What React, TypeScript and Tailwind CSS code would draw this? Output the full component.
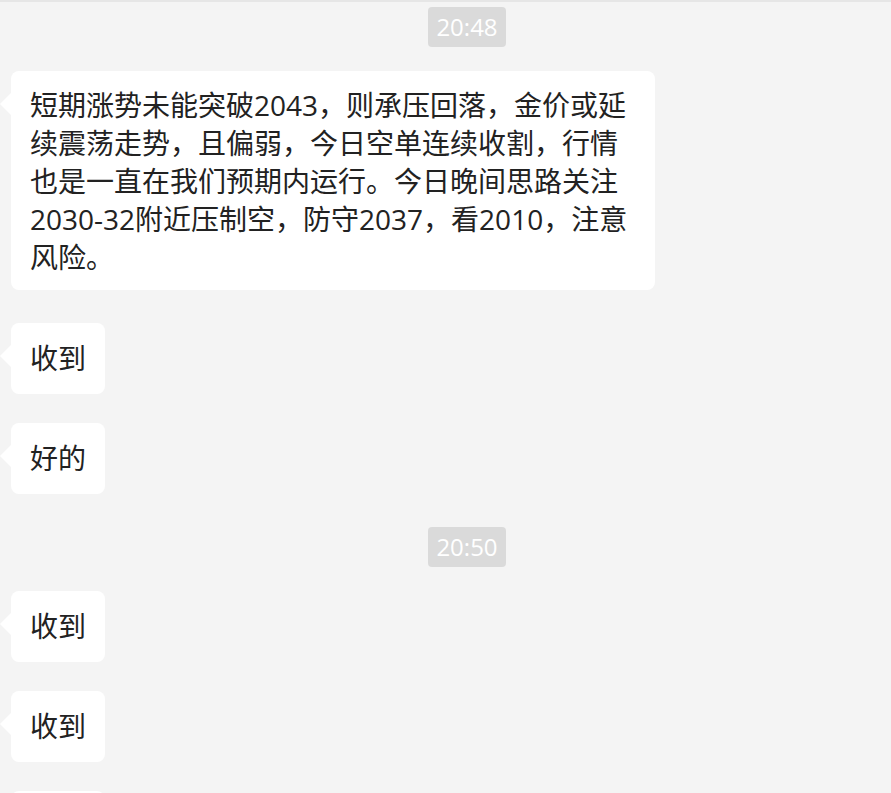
const cjk = "font-['Open_Sans','Noto_Sans_CJK_SC',sans-serif]";

function Stamp({ time, className }: { time: string; className?: string }) {
  return (
    <div className={`flex justify-center pl-[43px] ${className ?? ""}`}>
      <span className={`h-10 w-[78px] rounded-[4px] bg-[#dadada] text-center text-[24px] leading-10 text-white ${cjk}`}>
        {time}
      </span>
    </div>
  );
}

function Bubble({ children, className }: { children: React.ReactNode; className?: string }) {
  return (
    <div className={`pl-[11px] ${className ?? ""}`}>
      <div className="relative inline-block rounded-lg bg-white">
        <span className="absolute -left-[11px] top-[22px] h-0 w-0 border-y-[11px] border-r-[11px] border-y-transparent border-r-white" />
        {children}
      </div>
    </div>
  );
}

const msg = `px-[19px] pb-[17px] pt-4 text-[28px] leading-[38px] text-[#222222] ${cjk}`;

export default function App() {
  const lines = [
    "短期涨势未能突破2043，则承压回落，金价或延",
    "续震荡走势，且偏弱，今日空单连续收割，行情",
    "也是一直在我们预期内运行。今日晚间思路关注",
    "2030-32附近压制空，防守2037，看2010，注意",
    "风险。",
  ];

  return (
    <div className="h-[793px] overflow-hidden border-t-2 border-[#e6e6e6] bg-[#f4f4f4] pt-[5px]">
      <Stamp time="20:48" />

      <Bubble className="mt-6">
        <div className={`w-[644px] whitespace-nowrap pb-[14px] pl-[19px] pt-[15px] text-[28px] leading-[38px] text-[#222222] ${cjk}`}>
          {lines.map((l) => (
            <div key={l}>{l}</div>
          ))}
        </div>
      </Bubble>

      <Bubble className="mt-[33px]">
        <div className={msg}>收到</div>
      </Bubble>
      <Bubble className="mt-[29px]">
        <div className={msg}>好的</div>
      </Bubble>

      <Stamp time="20:50" className="mt-[33px]" />

      <Bubble className="mt-6">
        <div className={msg}>收到</div>
      </Bubble>
      <Bubble className="mt-[29px]">
        <div className={msg}>收到</div>
      </Bubble>
      <Bubble className="mt-[29px]">
        <div className={msg}>收到</div>
      </Bubble>
    </div>
  );
}
